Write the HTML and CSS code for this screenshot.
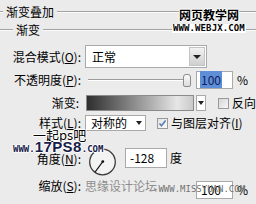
FILE: index.html
```html
<!DOCTYPE html>
<html>
<head>
<meta charset="utf-8">
<link rel="stylesheet" href="styles.css">
</head>
<body>
<div class="panel">
  <div class="title"><span class="rule short"></span><span class="title-text">渐变叠加</span><span class="rule"></span></div>
  <div class="legend"><span class="rule lg"></span><span class="legend-text">渐变</span><span class="rule"></span></div>

  <div class="row row-mode">
    <span class="lbl">混合模式(<u>O</u>):</span>
    <div class="select select-mode"><span class="select-value">正常</span><span class="select-btn"><i class="tri"></i></span></div>
  </div>

  <div class="row row-opacity">
    <span class="lbl">不透明度(<u>P</u>):</span>
    <div class="slider"><span class="track"></span><span class="thumb"></span></div>
    <div class="input input-pct"><span class="sel">100</span></div>
    <span class="unit">%</span>
  </div>

  <div class="row row-gradient">
    <span class="lbl lbl-grad">渐变:</span>
    <div class="gradient"><span class="grad-bar"></span><span class="grad-btn"><i class="tri small"></i></span></div>
    <span class="check check-reverse"></span>
    <span class="check-text">反向</span>
  </div>

  <div class="row row-style">
    <span class="lbl">样式(<u>L</u>):</span>
    <div class="select select-style"><span class="select-value">对称的</span><span class="select-btn small-btn"><i class="tri small"></i></span></div>
    <span class="check check-align"><svg width="9" height="9" viewBox="0 0 9 9"><path d="M1.5 4.5 L3.5 6.8 L7.6 1.6" fill="none" stroke="#5a7fb5" stroke-width="1.6"/></svg></span>
    <span class="check-text">与图层对齐(<u>I</u>)</span>
  </div>

  <div class="row row-angle">
    <span class="lbl lbl-top">角度(<u>N</u>):</span>
    <div class="dial">
      <svg width="29" height="28" viewBox="0 0 29 28">
        <circle cx="14.5" cy="14" r="12.8" fill="#f3f3f3" stroke="#3a3a3a" stroke-width="1.3"/>
        <line x1="14.8" y1="13.6" x2="7.2" y2="23.8" stroke="#111" stroke-width="1.1"/>
        <circle cx="14.8" cy="13.6" r="1.4" fill="#111"/>
      </svg>
    </div>
    <div class="input input-angle">-128</div>
    <span class="unit unit-deg">度</span>
  </div>

  <div class="row row-scale">
    <span class="lbl lbl-scale">缩放(<u>S</u>):</span>
    <div class="input input-scale">100</div>
    <span class="unit">%</span>
  </div>
</div>

<div class="wm wm-webjx-cn">网页教学网</div>
<div class="wm wm-webjx-en">WWW.WEBJX.COM</div>
<div class="wm wm-yiqi">一起ps吧</div>
<div class="wm wm-17ps8"><span class="sm">WWW.</span><span class="big">17PS8</span><span class="sm">.COM</span></div>
<div class="wm wm-miss-cn">思缘设计论坛</div>
<div class="wm wm-miss-en">-WWW.MISSYUAN.COM</div>
</body>
</html>
```

FILE: styles.css
```css
* { box-sizing: border-box; margin: 0; padding: 0; }
html, body { width: 256px; height: 204px; overflow: hidden; }
body {
  background: #ebebeb;
  font: 12px/14px "Noto Sans CJK SC", "Noto Sans", sans-serif;
  color: #000;
  position: relative;
}
u { text-decoration: underline; text-underline-offset: 1px; }

.panel { display: flex; flex-direction: column; }

.title { height: 24px; display: flex; align-items: center; gap: 3px; }
.legend { height: 12px; display: flex; align-items: center; gap: 3px; }
.rule { flex: 1; height: 2px; border-top: 1px solid #a3a3a3; border-bottom: 1px solid #fbfbfb; }
.rule.short { flex: 0 0 3px; }
.rule.lg { flex: 0 0 13px; }

.row { display: flex; align-items: center; }
.lbl { flex: none; width: 81px; text-align: right; white-space: nowrap; }
.lbl-grad { width: 79px; }

.row-mode { height: 23px; margin-top: 9px; }
.row-opacity { height: 18px; margin-top: 3px; }
.row-gradient { height: 16px; margin-top: 6px; }
.row-style { height: 16px; margin-top: 4px; }
.row-angle { height: 28px; margin-top: 17px; align-items: flex-start; }
.row-scale { height: 18px; margin-top: 5px; }

.select { display: flex; background: #fff; border: 1px solid #a9a9a9; margin-left: 4px; }
.select-mode { width: 122px; height: 23px; }
.select-style { width: 61px; height: 16px; }
.select-value { flex: 1; padding-left: 6px; white-space: nowrap; }
.select-mode .select-value { line-height: 21px; }
.select-style .select-value { line-height: 14px; padding-left: 5px; }
.select-btn {
  flex: none; width: 16px; margin: 1px;
  background: linear-gradient(#f2f2f2, #cfcfcf);
  border: 1px solid #c4c4c4;
  display: flex; align-items: center; justify-content: center;
}
.small-btn { width: 11px; background: #fff; border: none; }
.tri { display: block; width: 0; height: 0; border-left: 4px solid transparent; border-right: 4px solid transparent; border-top: 4px solid #222; }
.tri.small { border-left-width: 3px; border-right-width: 3px; border-top-width: 4px; }

.slider { display: flex; align-items: center; margin-left: 7px; height: 18px; }
.track { width: 95px; height: 2px; border-top: 1px solid #9c9c9c; border-bottom: 1px solid #fff; }
.thumb { width: 8px; height: 13px; border: 1px solid #8c8c8c; border-radius: 3px 3px 2px 2px; background: linear-gradient(#fafafa, #dcdcdc); }

.input { background: #fff; border: 1px solid #a9a9a9; white-space: nowrap; }
.input-pct { width: 37px; height: 18px; margin-left: 5px; padding: 1px 0 0 3px; line-height: 14px; }
.sel { background: #5d8ed6; color: #102060; padding: 0 1px; }
.unit { margin-left: 4px; }
.input-angle { width: 42px; height: 20px; margin-left: 8px; padding-left: 4px; line-height: 18px; }
.unit-deg { margin-left: 3px; line-height: 20px; }
.input-scale { width: 37px; height: 18px; margin-left: 115px; padding-left: 4px; line-height: 16px; }
.lbl-top { line-height: 22px; }
.lbl-scale { align-self: flex-start; margin-top: -2px; }

.gradient { display: flex; gap: 2px; margin-left: 7px; height: 16px; }
.grad-bar { width: 108px; border: 1px solid #8a8a8a; background: linear-gradient(to right, #2e2e2e 0%, #6d6d6d 30%, #b9b9b9 65%, #e6e6e6 85%, #c9c9c9 100%); }
.grad-btn { width: 10px; background: #fff; border: 1px solid #a9a9a9; display: flex; align-items: center; justify-content: center; }

.check { flex: none; width: 11px; height: 11px; border: 1px solid #9a9a9a; background: linear-gradient(135deg, #d6d6d6, #f6f6f6); display: flex; align-items: center; justify-content: center; }
.check-reverse { margin-left: 12px; }
.check-align { margin-left: 11px; background: linear-gradient(135deg, #e2e2e2, #fbfbfb); }
.check-text { margin-left: 3px; white-space: nowrap; }

.dial { margin-left: 7px; width: 29px; height: 28px; }
.dial svg { display: block; }

.wm { position: absolute; white-space: nowrap; }
.wm-webjx-cn { left: 179px; top: 7px; font-weight: bold; font-size: 12px; line-height: 16px; color: #000;
  text-shadow: 1px 0 #fff, -1px 0 #fff, 0 1px #fff, 0 -1px #fff; }
.wm-webjx-en { left: 172px; top: 24px; height: 9px; font: bold 9px/9px "DejaVu Sans Mono", monospace; letter-spacing: 0.1px; background: #fff; color: #000; padding: 0 1px; }
.wm-yiqi { left: 33px; top: 126px; font-size: 13px; line-height: 17px; color: #000;
  text-shadow: 1px 0 #fff, -1px 0 #fff, 0 1px #fff, 0 -1px #fff; }
.wm-17ps8 { left: 13px; top: 140px; color: #18204a; display: flex; align-items: baseline;
  text-shadow: 1px 0 #fff, -1px 0 #fff, 0 1px #fff, 0 -1px #fff; }
.wm-17ps8 .sm { font: bold 9px/10px "DejaVu Sans Mono", monospace; }
.wm-17ps8 .big { font: 900 15px/14px "Liberation Sans", sans-serif; letter-spacing: 0.4px; }
.wm-miss-cn { left: 85px; top: 178px; color: #8e8e8e; font-size: 12px; line-height: 16px; }
.wm-miss-en { left: 153px; top: 185px; color: #727272; font: 9px/9px "DejaVu Sans Mono", monospace; }
```
